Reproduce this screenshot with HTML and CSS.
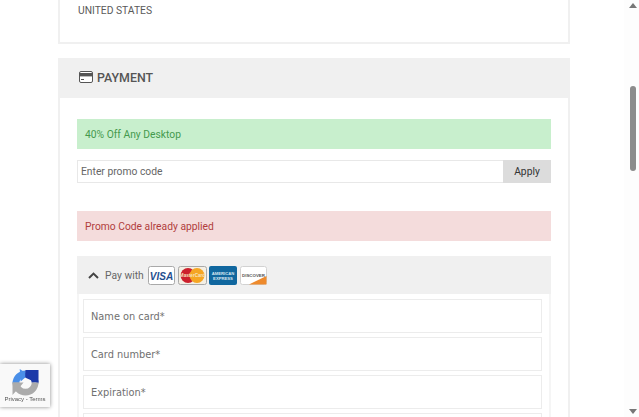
FILE: index.html
```html
<!DOCTYPE html>
<html lang="en">
  <head>
    <meta charset="UTF-8" />
    <meta name="viewport" content="width=device-width, initial-scale=1.0" />
    <title>Checkout</title>
    <link rel="stylesheet" href="styles.css">
  </head>
  <body>
    <main class="checkout">
      <!-- end of the address card -->
      <section class="address-card">
        <p>UNITED STATES</p>
      </section>

      <section class="payment-card">
        <h2 class="payment-title">
          <svg width="14" height="12" viewBox="0 0 14 12">
            <rect x="0.5" y="0.5" width="13" height="11" rx="1.5" fill="#fff" stroke="#555" />
            <rect x="0" y="2" width="14" height="3.4" fill="#555" />
            <rect x="2" y="8" width="3" height="1" fill="#555" />
          </svg>
          PAYMENT
        </h2>
        <div class="payment-body">
          <div class="alert alert-ok">40% Off Any Desktop</div>
          <div class="promo">
            <input class="promo-input" type="text" placeholder="Enter promo code" />
            <button class="promo-apply">Apply</button>
          </div>
          <div class="alert alert-bad">Promo Code already applied</div>

          <div class="pay-box">
            <div class="pay-head">
              <svg class="chevron" width="11" height="7" viewBox="0 0 11 7">
                <path d="M1 6 L5.5 1.6 L10 6" fill="none" stroke="#444" stroke-width="2" />
              </svg>
              <span class="pay-label">Pay with</span>
              <svg class="card-logo" width="27" height="19" viewBox="0 0 27 19">
                <rect x="0.5" y="0.5" width="26" height="18" rx="2" fill="#fff" stroke="#a9a9a9" />
                <text x="13.5" y="13.5" text-anchor="middle" class="visa-text">VISA</text>
              </svg>
              <svg class="card-logo" width="29" height="19" viewBox="0 0 29 19">
                <rect x="0.5" y="0.5" width="28" height="18" rx="2" fill="#f4efe4" stroke="#a9a9a9" />
                <circle cx="10" cy="9.5" r="7.5" fill="#cc1f2c" />
                <circle cx="19" cy="9.5" r="7.5" fill="#f5a623" />
                <text x="14.5" y="11" text-anchor="middle" class="mc-text">MasterCard</text>
              </svg>
              <svg class="card-logo" width="28" height="19" viewBox="0 0 28 19">
                <rect width="28" height="19" rx="2" fill="#10679f" />
                <text x="14" y="8.5" text-anchor="middle" class="amex-text">AMERICAN</text>
                <text x="14" y="14" text-anchor="middle" class="amex-text">EXPRESS</text>
              </svg>
              <svg class="card-logo" width="27" height="19" viewBox="0 0 27 19">
                <rect x="0.5" y="0.5" width="26" height="18" rx="2" fill="#fff" stroke="#d2d2d2" />
                <path d="M9 18.5 L26.5 18.5 L26.5 10 Z" fill="#ee8a2c" />
                <text x="13.5" y="10.5" text-anchor="middle" class="discover-text">DISCOVER</text>
              </svg>
            </div>
            <div class="pay-fields">
              <div class="field">Name on card*</div>
              <div class="field">Card number*</div>
              <div class="field">Expiration*</div>
              <div class="field"></div>
            </div>
          </div>
        </div>
      </section>
    </main>

    <!-- things that float over the page -->
    <div class="recaptcha">
      <svg width="27" height="27" viewBox="0 0 28 28">
        <path d="M4 15 A10 10 0 0 1 14 5" fill="none" stroke="#4a8fe8" stroke-width="7" />
        <path d="M8 0 L17 6 L9 13 Z" fill="#4a8fe8" />
        <path d="M14 5 A10 10 0 0 1 24 14" fill="none" stroke="#1c3aa9" stroke-width="7" />
        <path d="M14 1 L27.5 1 L27.5 15 L14 9 Z" fill="#1c3aa9" />
        <path d="M24 14 A10 10 0 0 1 4 14" fill="none" stroke="#ababab" stroke-width="7" />
        <path d="M0.5 14 L12 14 L7 20 L0.5 27 Z" fill="#ababab" />
      </svg>
      <span class="recaptcha-links">Privacy - Terms</span>
    </div>

    <div class="scrollbar">
      <span class="scroll-up"></span>
      <span class="scroll-thumb"></span>
      <span class="scroll-down"></span>
    </div>
  </body>
</html>
```

FILE: styles.css
```css
html,
body {
  height: 100%;
}
body {
  margin: 0;
  overflow: hidden;
  background: #fff;
  color: #555;
  font-family: Roboto, sans-serif;
  font-size: 10.3px;
}

.checkout {
  width: 512px;
  margin-left: 58px;
}

/* Cards */
.address-card {
  box-sizing: border-box;
  height: 44px;
  padding: 4px 18px 0;
  border: 2px solid #f0f0f0;
  border-top: 0;
  margin-bottom: 14px;
}
.address-card p {
  margin: 0;
  line-height: 14px;
  color: #5a5a5a;
}
.payment-title {
  box-sizing: border-box;
  display: flex;
  align-items: center;
  gap: 4px;
  height: 40px;
  margin: 0;
  padding: 0 0 2px 21px;
  background: #f0f0f0;
  color: #555;
  font-size: 12.4px;
  font-weight: 500;
}
.payment-body {
  padding: 21px 17px 0;
  border: 2px solid #f0f0f0;
  border-top: 0;
}

/* Alerts and promo */
.alert {
  height: 30px;
  padding-left: 8px;
  line-height: 32px;
}
.alert-ok {
  background: #c8efcd;
  color: #459a4d;
}
.alert-bad {
  background: #f4dcdc;
  color: #b13d3d;
}
.promo {
  display: flex;
  height: 23px;
  margin: 11px 0 28px;
}
.promo-input {
  flex: 1;
  min-width: 0;
  box-sizing: border-box;
  padding: 0 3px;
  border: 1px solid #e8e8e8;
  border-right: 0;
  font-family: inherit;
  font-size: 10.3px;
}
.promo-input::placeholder {
  color: #666;
  opacity: 1;
}
.promo-apply {
  width: 48px;
  padding: 0;
  border: 0;
  background: #dcdcdc;
  color: #333;
  font-family: inherit;
  font-size: 10.3px;
}

/* Pay with box */
.pay-box {
  margin-top: 15px;
  border: 2px solid #f5f5f5;
  border-top: 0;
  border-bottom: 0;
}
.pay-head {
  display: flex;
  align-items: center;
  gap: 2.5px;
  height: 38px;
  margin: 0 -2px;
  padding-left: 11px;
  background: #f0f0f0;
  color: #666;
}
.chevron {
  margin-right: 3.5px;
}
.pay-label {
  width: 40.5px;
}
.visa-text {
  fill: #1f4f8f;
  font-family: "Liberation Sans", sans-serif;
  font-size: 10px;
  font-style: italic;
  font-weight: 700;
}
.mc-text {
  fill: #f6e3c0;
  font-family: "Liberation Sans", sans-serif;
  font-size: 4.6px;
  font-weight: 700;
}
.amex-text {
  fill: #d7e6f0;
  font-family: "Liberation Sans", sans-serif;
  font-size: 4.2px;
  font-weight: 700;
}
.discover-text {
  fill: #555;
  font-family: "Liberation Sans", sans-serif;
  font-size: 4.4px;
  font-weight: 700;
}
.pay-fields {
  display: flex;
  flex-direction: column;
  gap: 4px;
  padding: 5px 7px 0 4px;
}
.field {
  flex: none;
  box-sizing: border-box;
  height: 34px;
  padding-left: 7px;
  border: 1px solid #ececec;
  color: #707070;
  font-family: "DejaVu Sans", sans-serif;
  font-size: 9.8px;
  line-height: 34px;
}

/* reCAPTCHA badge */
.recaptcha {
  position: fixed;
  left: 0;
  top: 364px;
  display: flex;
  flex-direction: column;
  align-items: center;
  width: 50px;
  height: 43px;
  padding-top: 5px;
  box-sizing: border-box;
  background: #f9f9f9;
  box-shadow: 0 0 4px #888;
}
.recaptcha-links {
  margin-top: 0;
  font-family: "Liberation Sans", sans-serif;
  font-size: 6px;
  white-space: nowrap;
}

/* Scrollbar drawn by hand, the page itself does not scroll */
.scrollbar {
  position: fixed;
  top: 0;
  right: 0;
  bottom: 0;
  width: 15px;
  background: #fdfdfd;
}
.scroll-thumb {
  position: absolute;
  top: 86px;
  left: 6px;
  width: 6px;
  height: 85px;
  border-radius: 3px;
  background: #8c8c8c;
}
.scroll-up,
.scroll-down {
  position: absolute;
  left: 5px;
  border-left: 4px solid transparent;
  border-right: 4px solid transparent;
}
.scroll-up {
  top: 3px;
  border-bottom: 5px solid #777;
}
.scroll-down {
  bottom: 3px;
  border-top: 5px solid #777;
}
```
